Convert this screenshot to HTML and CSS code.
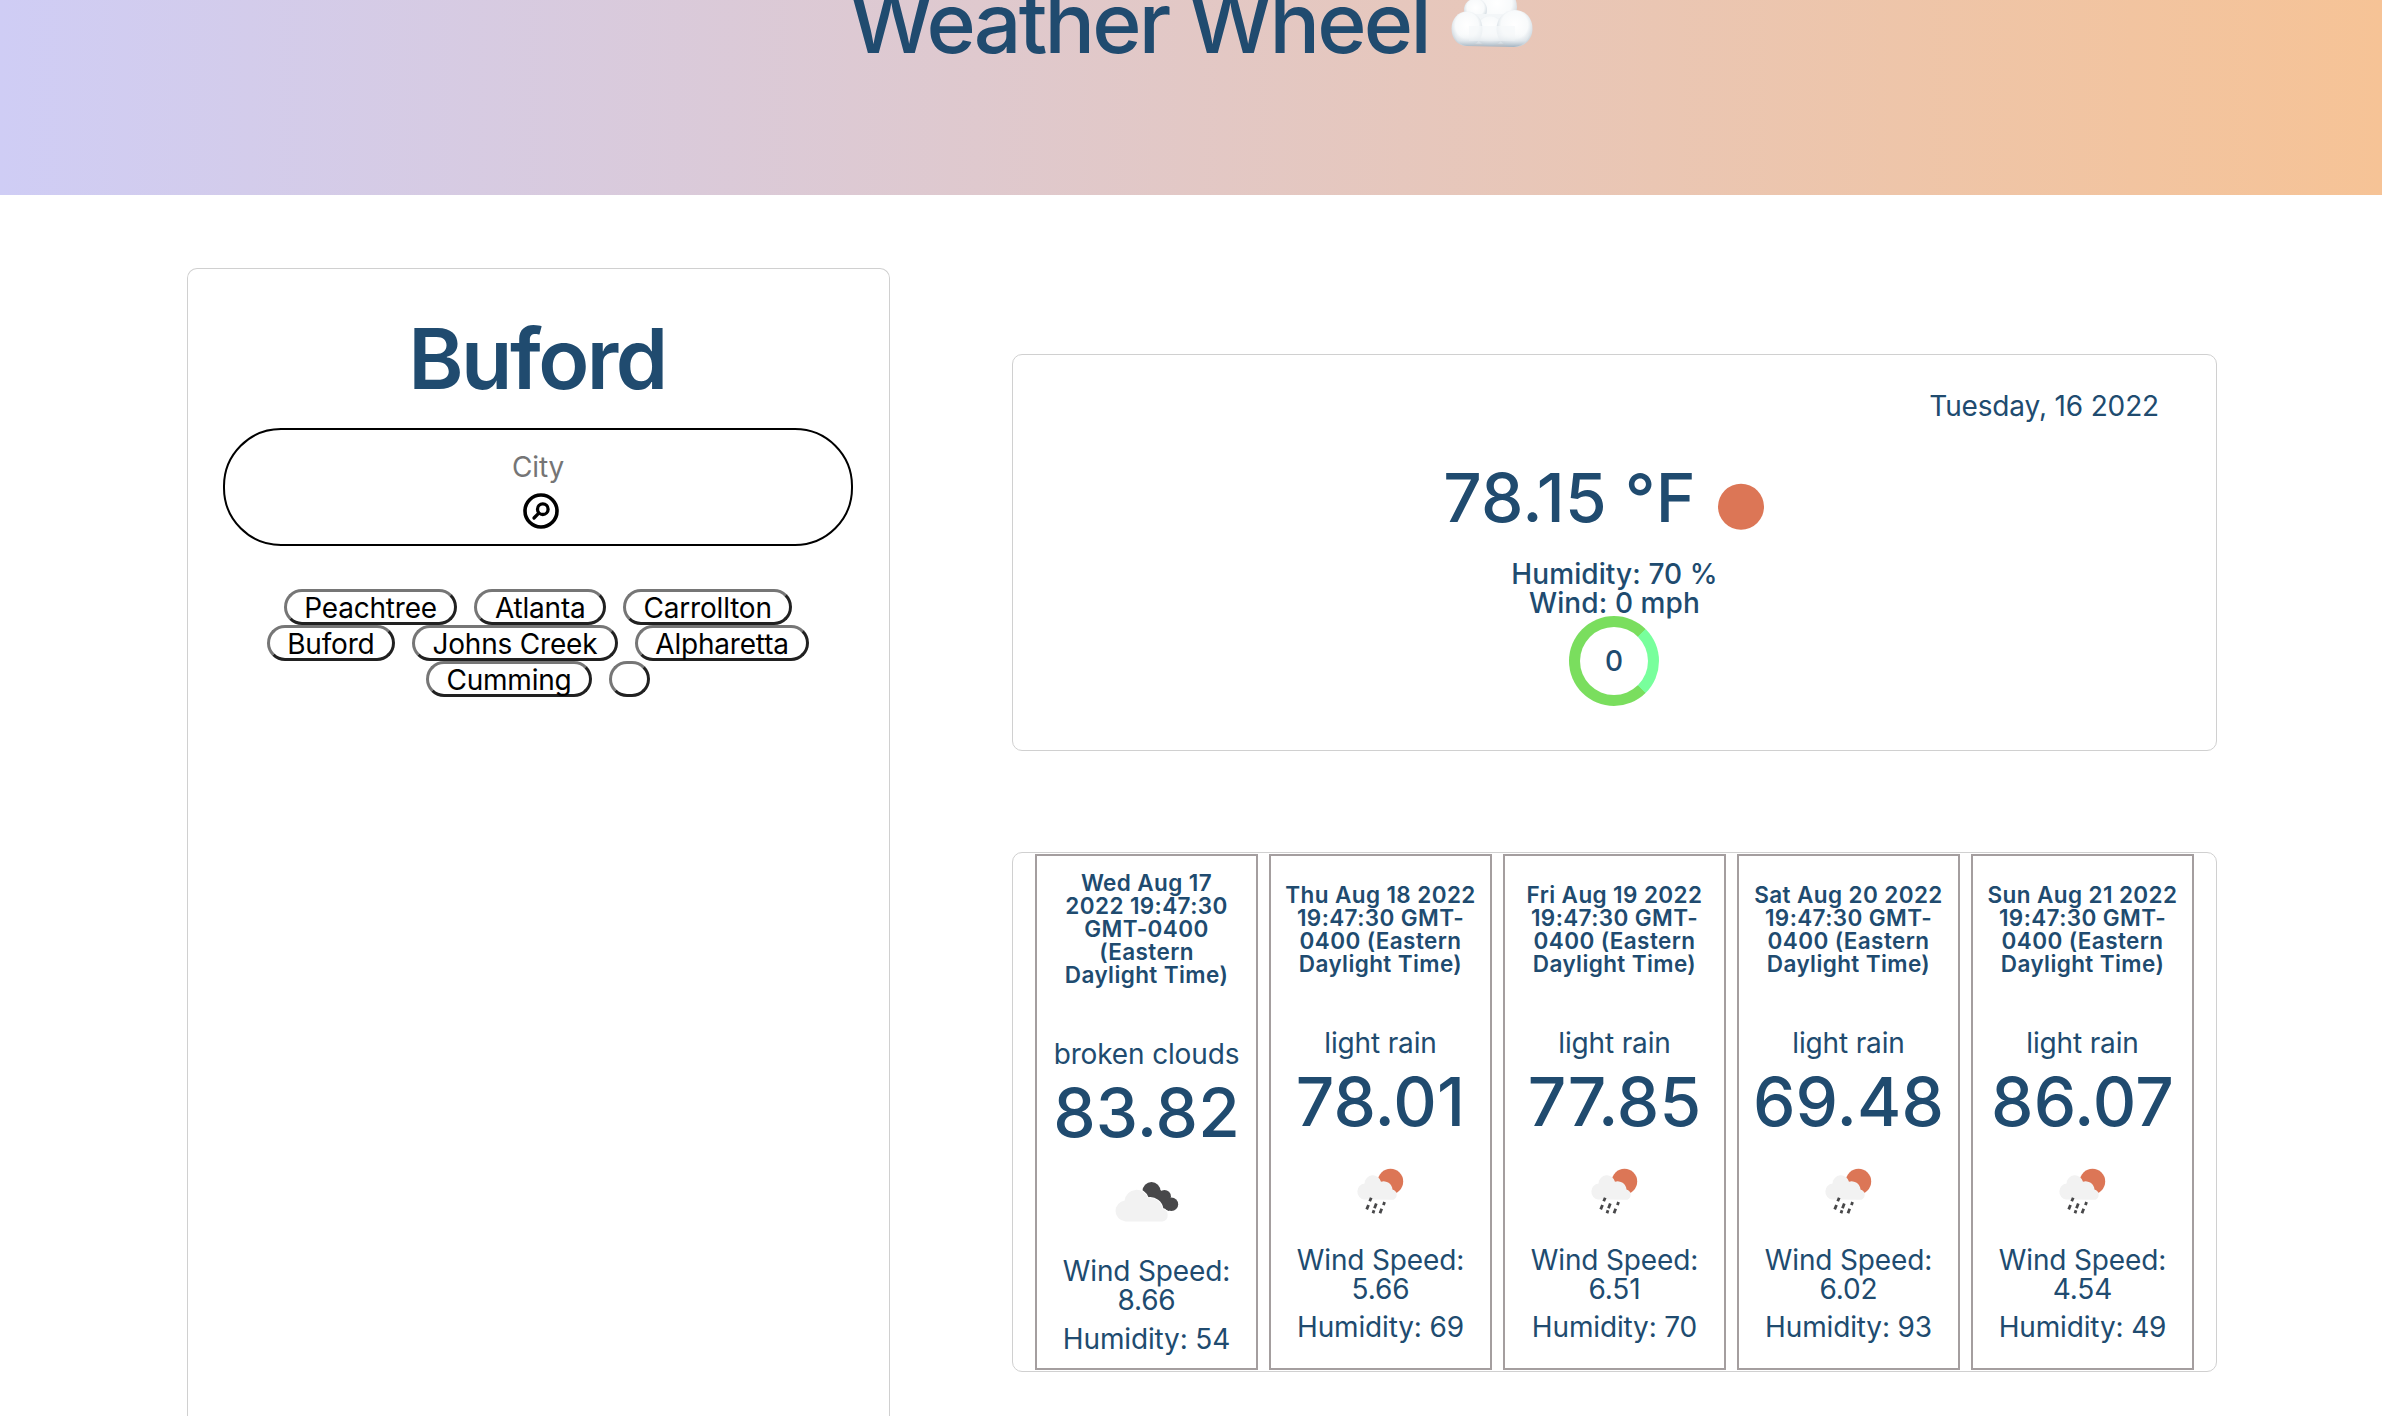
FILE: index.html
```html
<!DOCTYPE html>
<html lang="en">
<head>
<meta charset="utf-8">
<title>Weather Wheel</title>
<link rel="stylesheet" href="styles.css">
</head>
<body>
<svg class="sprite" aria-hidden="true">
  <symbol id="broken-clouds" viewBox="0 0 90 90">
    <g fill="#48484a">
      <circle cx="50.5" cy="35" r="9"/><circle cx="63.5" cy="40.3" r="6.4"/><circle cx="70.4" cy="48.3" r="6.8"/>
      <path d="M48 42 58 33 72 44 68 55 60 52Z"/>
    </g>
    <g fill="#f2f2f2" stroke="#fff" stroke-width="2" paint-order="stroke">
      <path d="M24.5 65.4a10.5 10.5 0 0 1-.8-20.9A11.9 11.9 0 0 1 46.9 42.200A12.500 12.500 0 0 1 61.500 53a6.300 6.300 0 0 1 0 12.400Z"/>
    </g>
  </symbol>
  <symbol id="light-rain" viewBox="0 0 90 90">
    <circle cx="55.500" cy="36.500" r="12.700" fill="#dc7656"/>
    <path fill="#f2f2f2" d="M29 54.600a8.200 8.200 0 0 1 .6-16.200A8.300 8.300 0 0 1 46 36.800A8.800 8.800 0 0 1 57.500 44.500a5.500 5.500 0 0 1 1 10.300Z"/>
    <g stroke="#48484a" stroke-width="2.800">
      <path d="m36.200 52.800-1.500 3.400M33.500 60l-1.800 4.400M41.300 58.600l-1.800 4.600M49.500 57l-1 3.200M39 65.300l-1 3M46.700 63.800l-1.700 4.400"/>
    </g>
  </symbol>
</svg>

<header class="banner">
  <h1 class="title">Weather Wheel</h1>
  <svg class="title-cloud" viewBox="0 -17 82 78">
    <defs>
      <radialGradient id="puff" cx=".5" cy=".4" r=".62">
        <stop offset="0" stop-color="#fff"/><stop offset=".6" stop-color="#f8fafb"/><stop offset="1" stop-color="#c3ced7"/>
      </radialGradient>
      <linearGradient id="base" x1="0" y1="0" x2="0" y2="1">
        <stop offset="0" stop-color="#f8fafb" stop-opacity="0"/><stop offset=".55" stop-color="#dfe6eb" stop-opacity=".6"/><stop offset="1" stop-color="#a3b3c0"/>
      </linearGradient>
    </defs>
    <circle cx="46" cy="7" r="20" fill="url(#puff)"/>
    <circle cx="24.500" cy="10" r="11.500" fill="url(#puff)"/>
    <rect x="14" y="14" width="52" height="30" fill="#f3f6f8"/>
    <circle cx="39" cy="31" r="15" fill="url(#puff)"/>
    <path fill="url(#puff)" d="M16 46C6 46 .5 38 .5 28.500S7 11.500 16 11.500 31.500 19 31.500 29 26 46 16 46Z"/>
    <path fill="url(#puff)" d="M63 47C52 47 45.500 39 45.500 29S53 10 63.500 10 81.500 18 81.500 28.500 74 47 63 47Z"/>
    <path fill="#f6f8f9" d="M18 26h46v15H18Z" opacity=".75"/>
    <path fill="url(#base)" d="M3 33H79C77 41 72 46.500 63 47L16 46C9 45.500 4.500 40 3 33Z"/>
  </svg>
</header>

<main class="layout">
  <aside class="card sidebar">
    <h2 class="city">Buford</h2>
    <form class="search">
      <span class="placeholder">City</span>
      <svg class="search-icon" viewBox="0 0 36 36" fill="none" stroke="#000" stroke-linecap="round">
        <circle cx="18" cy="18" r="16" stroke-width="3.600"/>
        <circle cx="19.800" cy="16.200" r="5.300" stroke-width="3.300"/>
        <path d="M15.800 20.200 11 25" stroke-width="3.300"/>
      </svg>
    </form>
    <div class="history">
      <button class="chip" type="button">Peachtree</button>
      <button class="chip" type="button">Atlanta</button>
      <button class="chip" type="button">Carrollton</button>
      <button class="chip" type="button">Buford</button>
      <button class="chip" type="button">Johns Creek</button>
      <button class="chip" type="button">Alpharetta</button>
      <button class="chip" type="button">Cumming</button>
      <button class="chip" type="button"></button>
    </div>
  </aside>

  <div class="content">
    <section class="card current">
      <p class="today">Tuesday, 16 2022</p>
      <div class="now">
        <span class="temp">78.15 °F</span>
        <svg class="sun" viewBox="0 0 90 66"><circle cx="45" cy="42.700" r="23" fill="#dc7656"/></svg>
      </div>
      <p class="stats">Humidity: 70 %<br>Wind: 0 mph</p>
      <div class="uv"><span class="uv-value">0</span></div>
    </section>

    <section class="card forecast">
      <article class="day">
        <h3 class="date">Wed Aug 17<br>2022 19:47:30<br>GMT-0400<br>(Eastern<br>Daylight Time)</h3>
        <p class="desc">broken clouds</p>
        <p class="temp">83.82</p>
        <svg class="icon"><use href="#broken-clouds"/></svg>
        <p class="wind">Wind Speed:<br>8.66</p>
        <p class="humidity">Humidity: 54</p>
      </article>
      <article class="day">
        <h3 class="date">Thu Aug 18 2022<br>19:47:30 GMT-<br>0400 (Eastern<br>Daylight Time)</h3>
        <p class="desc">light rain</p>
        <p class="temp">78.01</p>
        <svg class="icon"><use href="#light-rain"/></svg>
        <p class="wind">Wind Speed:<br>5.66</p>
        <p class="humidity">Humidity: 69</p>
      </article>
      <article class="day">
        <h3 class="date">Fri Aug 19 2022<br>19:47:30 GMT-<br>0400 (Eastern<br>Daylight Time)</h3>
        <p class="desc">light rain</p>
        <p class="temp">77.85</p>
        <svg class="icon"><use href="#light-rain"/></svg>
        <p class="wind">Wind Speed:<br>6.51</p>
        <p class="humidity">Humidity: 70</p>
      </article>
      <article class="day">
        <h3 class="date">Sat Aug 20 2022<br>19:47:30 GMT-<br>0400 (Eastern<br>Daylight Time)</h3>
        <p class="desc">light rain</p>
        <p class="temp">69.48</p>
        <svg class="icon"><use href="#light-rain"/></svg>
        <p class="wind">Wind Speed:<br>6.02</p>
        <p class="humidity">Humidity: 93</p>
      </article>
      <article class="day">
        <h3 class="date">Sun Aug 21 2022<br>19:47:30 GMT-<br>0400 (Eastern<br>Daylight Time)</h3>
        <p class="desc">light rain</p>
        <p class="temp">86.07</p>
        <svg class="icon"><use href="#light-rain"/></svg>
        <p class="wind">Wind Speed:<br>4.54</p>
        <p class="humidity">Humidity: 49</p>
      </article>
    </section>
  </div>
</main>
</body>
</html>
```
FILE: styles.css
```css
* { box-sizing: border-box; }

body {
  margin: 0;
  height: 1416px;
  overflow: hidden;
  background: #fff;
  color: #204b6f;
  font: 400 28px/34px Inter, "Liberation Sans", sans-serif;
  letter-spacing: -0.15px;
}

h1, h2, h3, p { margin: 0; }
svg { display: block; flex: none; }
.sprite { display: none; }

.banner {
  display: flex;
  justify-content: center;
  align-items: flex-start;
  gap: 22px;
  height: 395px;
  margin-top: -200px;
  padding-top: 181px;
  background: linear-gradient(to right, #cfcdf5, #f6c396);
}
.title {
  font-size: 84px;
  line-height: 84px;
  font-weight: 500;
  letter-spacing: -2.8px;
}
.title-cloud { width: 82px; height: 78px; margin-top: 2px; }

.layout {
  display: flex;
  align-items: flex-start;
  padding: 73px 165px 0 187px;
}
.card {
  border: 1px solid #d0d0d0;
  border-radius: 10px;
}

.sidebar {
  width: 703px;
  height: 1148px;
  padding: 46px 36px 0 35px;
  border-bottom: 0;
  border-radius: 10px 10px 0 0;
  text-align: center;
}
.city {
  margin-right: 2px;
  font-size: 84px;
  line-height: 88px;
  font-weight: 600;
  letter-spacing: -2.5px;
}
.search {
  display: flex;
  flex-direction: column;
  align-items: center;
  gap: 9px;
  height: 118px;
  margin-top: 25px;
  padding-top: 20px;
  border: 2px solid #000;
  border-radius: 58px;
}
.placeholder { color: #757575; }
.search-icon { width: 36px; height: 36px; margin-left: 6px; }

.history {
  display: flex;
  flex-wrap: wrap;
  justify-content: center;
  column-gap: 17px;
  margin: 43px 0 0;
}
.chip {
  height: 36px;
  padding: 1px 17.5px 0;
  border: 3px solid;
  border-color: #767676 #212121 #212121 #767676;
  border-radius: 18px;
  background: #fff;
  color: #000;
  font: inherit;
  line-height: 30px;
  letter-spacing: -0.2px;
}

.content {
  width: 1205px;
  margin: 86px 0 0 122px;
}
.current {
  display: flex;
  flex-direction: column;
  align-items: center;
  height: 397px;
  padding-top: 34px;
  text-align: center;
}
.today { align-self: flex-end; margin-right: 57px; }
.now {
  display: flex;
  align-items: center;
  margin-top: 35px;
}
.temp {
  font-size: 67.5px;
  line-height: 80px;
  font-weight: 500;
  letter-spacing: 0.1px;
}
.sun { width: 90px; height: 66px; margin-top: -2px; }
.stats {
  margin-top: 22px;
  font-weight: 500;
  line-height: 28.8px;
  letter-spacing: 0.1px;
}
.uv {
  display: grid;
  place-items: center;
  width: 90px;
  height: 90px;
  margin: -2px 1px 0 0;
  border-radius: 50%;
  background: conic-gradient(from 45deg, #78ff9c 90deg, #7ade5e 0);
}
.uv-value {
  width: 68px;
  padding-top: 1px;
  border-radius: 50%;
  background: #fff;
  font-weight: 500;
  line-height: 67px;
}

.forecast {
  display: flex;
  gap: 11px;
  height: 520px;
  margin-top: 101px;
  padding: 1px 22px;
}
.day {
  display: flex;
  flex-direction: column;
  align-items: center;
  justify-content: center;
  width: 223px;
  padding-top: 1px;
  border: 2px solid #a49e9f;
  text-align: center;
}
.date {
  margin-bottom: 51px;
  font-size: 22.5px;
  line-height: 23px;
  font-weight: 600;
  letter-spacing: 0.4px;
}
.day .temp { margin: 2px 0 3px; }
.icon { width: 90px; height: 90px; margin: 0 1px 11px 0; }
.wind, .humidity { line-height: 28.8px; }
.humidity { margin-top: 10px; }
```
